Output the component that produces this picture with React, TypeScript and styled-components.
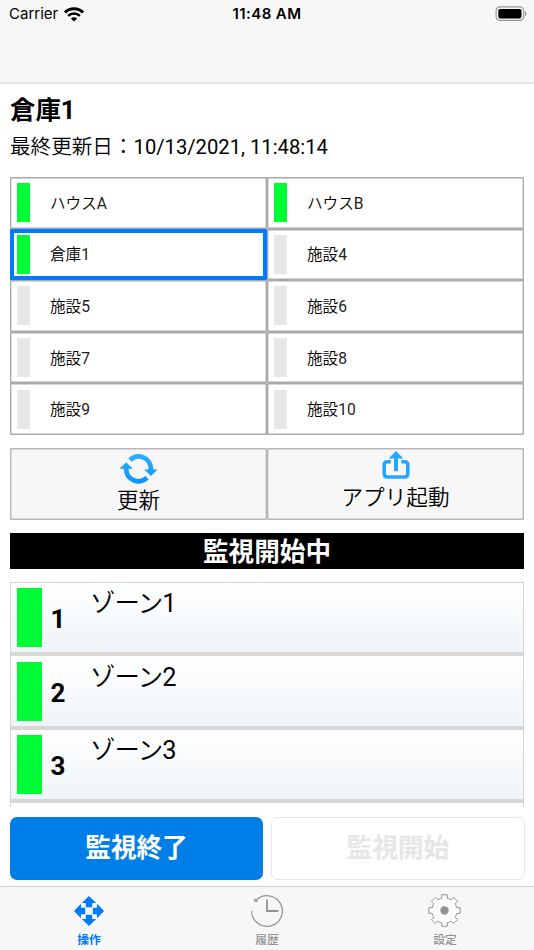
import React from "react";
import styled, { createGlobalStyle } from "styled-components";

const GlobalStyle = createGlobalStyle`
  * { box-sizing: border-box; }
  body {
    margin: 0;
    background: #fff;
    color: #000;
    font-family: Roboto, "Noto Sans CJK JP", sans-serif;
  }
  button { font-family: inherit; color: inherit; margin: 0; padding: 0; border: 0; }
`;

const Screen = styled.div`
  width: 534px;
  height: 950px;
  display: flex;
  flex-direction: column;
  overflow: hidden;
  background: #fff;
`;

const NavBar = styled.header`
  height: 84px;
  flex: none;
  background: #f7f7f7;
  border-bottom: 2px solid #e6e6e6;
`;

const StatusBar = styled.div`
  height: 28px;
  display: grid;
  grid-template-columns: 1fr auto 1fr;
  align-items: center;
  padding: 0 7px 0 9px;
  font-family: Inter, sans-serif;
  line-height: 28px;
`;

const Carrier = styled.div`
  display: flex;
  align-items: center;
  gap: 6px;
  font-size: 15px;
`;

const Clock = styled.div`
  margin-right: 2px;
  font-weight: 600;
  font-size: 15px;
  letter-spacing: 0.4px;
`;

const BatterySlot = styled.div`
  display: flex;
  justify-content: flex-end;
`;

const Content = styled.main`
  height: 802px;
  flex: none;
  display: flex;
  flex-direction: column;
  padding: 0 10px;
`;

const Title = styled.h1`
  margin: 9px 0 0;
  height: 34px;
  line-height: 34px;
  font-size: 25.4px;
  font-weight: 700;
`;

const Updated = styled.div`
  display: flex;
  margin-top: 3px;
  height: 30px;
  line-height: 34px;
  font-size: 20.6px;
  white-space: nowrap;
`;

const Stamp = styled.span`
  font-size: 20.2px;
`;

const Light = styled.span`
  font-weight: 350;
`;

const SiteGrid = styled.div`
  margin-top: 17px;
  height: 258px;
  display: grid;
  flex: none;
  grid-template-columns: 257px 257px;
  grid-auto-rows: 51.6px;
`;

const Site = styled.div<{ $selected?: boolean }>`
  display: flex;
  align-items: center;
  gap: 20.5px;
  padding: 0 6.5px;
  border-radius: 1px;
  box-shadow: inset 0 0 0 ${(p) => (p.$selected ? "4px #007aff" : "1.4px #aaaaaa")};
  font-size: 15.6px;
  line-height: 22px;
`;

const SiteLamp = styled.i<{ $on?: boolean }>`
  width: 13px;
  height: 39px;
  background: ${(p) => (p.$on ? "#00fc37" : "#e7e7e7")};
`;

const SiteName = styled.span`
  padding-top: 2px;
  font-weight: 350;
`;

const Suffix = styled.span`
  font-weight: 400;
  color: #222;
`;

const Actions = styled.div`
  margin-top: 13px;
  height: 72px;
  display: grid;
  flex: none;
  grid-template-columns: 257px 257px;
`;

const Action = styled.button<{ $top: number; $gap?: number }>`
  display: flex;
  flex-direction: column;
  align-items: center;
  gap: ${(p) => p.$gap ?? 0}px;
  padding-top: ${(p) => p.$top}px;
  background: #f7f7f7;
  border-radius: 1px;
  box-shadow: inset 0 0 0 1.4px #b8b8b8;
  font-size: 21.6px;
  line-height: 34px;
`;

const State = styled.div`
  margin-top: 13px;
  height: 36px;
  flex: none;
  background: #000;
  color: #fff;
  text-align: center;
  font-size: 25.6px;
  line-height: 38px;
  font-weight: 700;
`;

const ZoneList = styled.div`
  margin-top: 12.5px;
  width: 514px;
  height: 225px;
  flex: none;
  overflow: hidden;
  border: 1px solid #d5d5d5;
  border-bottom: 0;
`;

const Zone = styled.div`
  height: 73.5px;
  display: grid;
  grid-template-columns: 25px 48px 1fr;
  padding: 5.5px 5px 0 6px;
  background: linear-gradient(#ffffff, #eff4f8);
  border-bottom: 4px solid #d7d7d7;
`;

const ZoneLamp = styled.i`
  height: 59px;
  background: #00fc37;
`;

const ZoneNo = styled.b`
  padding-left: 8.5px;
  font-size: 26px;
  line-height: 62px;
`;

const ZoneName = styled.span`
  font-size: 25.4px;
  line-height: 30px;
`;

const ZoneKana = styled.span`
  font-weight: 350;
  letter-spacing: -0.9px;
`;

const Controls = styled.div`
  margin-top: 10px;
  height: 63px;
  display: grid;
  flex: none;
  grid-template-columns: 253px 254px;
  gap: 8px;
`;

const Control = styled.button<{ $primary?: boolean }>`
  border-radius: 7px;
  background: ${(p) => (p.$primary ? "#007ee8" : "#fff")};
  border: ${(p) => (p.$primary ? "0" : "1px solid #e5e5e5")};
  color: ${(p) => (p.$primary ? "#fff" : "#e6e6e6")};
  font-size: 25.6px;
  line-height: 38px;
  font-weight: 700;
`;

const TabBar = styled.nav`
  height: 64px;
  flex: none;
  display: grid;
  grid-template-columns: repeat(3, 1fr);
  background: #f7f7f7;
  border-top: 1px solid #d0d0d0;
`;

const Tab = styled.div<{ $active?: boolean }>`
  display: flex;
  flex-direction: column;
  align-items: center;
  padding-top: 5px;
  color: ${(p) => (p.$active ? "#007aff" : "#929292")};
  font-size: 11.8px;
  line-height: 18px;
  font-weight: ${(p) => (p.$active ? 700 : 500)};
  svg { margin-bottom: 1px; }
`;

const WifiIcon = () => (
  <svg width="20" height="15" viewBox="0 0 20 15" fill="none" stroke="#000" strokeWidth="2.9">
    <path d="M1 5.4a12.8 12.8 0 0 1 18 0" />
    <path d="M4.1 8.9a8.4 8.4 0 0 1 11.8 0" strokeWidth="2.6" />
    <path d="M6.9 11.5a4.4 4.4 0 0 1 6.2 0L10 14.6z" fill="#000" stroke="none" />
  </svg>
);

const BatteryIcon = () => (
  <svg width="32" height="16" viewBox="0 0 32 16">
    <rect x="1.1" y="0.8" width="27.6" height="13.6" rx="4" fill="none" stroke="#999" strokeWidth="1.2" />
    <rect x="3.3" y="3" width="23.2" height="9.4" rx="1.8" fill="#000" />
    <path d="M30 5.3c2 .7 2 4.1 0 4.8z" fill="#999" />
  </svg>
);

const RefreshIcon = () => (
  <svg width="39" height="30" viewBox="0 0 39 30">
    <defs>
      <linearGradient id="sync" gradientUnits="userSpaceOnUse" x1="0" y1="0" x2="0" y2="30">
        <stop offset="0" stopColor="#2bb0ff" />
        <stop offset="1" stopColor="#0b92fb" />
      </linearGradient>
    </defs>
    <g fill="none" stroke="url(#sync)" strokeWidth="4.8">
      <path d="M11 6A12.2 12.2 0 0 1 31.8 14.6V17" />
      <path d="M28 23.6A12.2 12.2 0 0 1 7.2 15V13" />
    </g>
    <path d="M25.2 15.4h13.4L32 22zM.4 14.8h13.4L7.2 8.2z" fill="url(#sync)" />
  </svg>
);

const ShareIcon = () => (
  <svg width="28" height="28" viewBox="0 0 28 28" fill="none" stroke="#27a6ff">
    <path d="M8.8 10.8H5.4Q2.2 10.8 2.2 14V22.8q0 3.2 3.2 3.2h17.2q3.2 0 3.2-3.2V14q0-3.2-3.2-3.2H19.2" strokeWidth="3.6" />
    <path d="M14 7v13.2" strokeWidth="4" />
    <path d="M6.6 7.6L14 0l7.4 7.6z" fill="#27a6ff" stroke="none" />
  </svg>
);

const MoveIcon = () => (
  <svg width="36" height="38" viewBox="-18 -19 36 38" fill="currentColor">
    {[0, 90, 180, 270].map((a) => (
      <path key={a} transform={`rotate(${a})`} d="M0-15L7.2-8H3.2V-3.8H-3.2V-8H-7.2z" />
    ))}
  </svg>
);

const HistoryIcon = () => (
  <svg width="36" height="38" viewBox="-18 -19 36 38" fill="none" stroke="currentColor" strokeWidth="1.2">
    <path d="M-10.8-10.8A15.3 15.3 0 1 1-15.3 0" />
    <path d="M-12.8-13V-9.2H-8.6z" fill="currentColor" stroke="none" />
    <path d="M0-11.5V0H11.5" strokeWidth="1.8" />
  </svg>
);

const toothed = Array.from({ length: 8 }, (_, i) => {
  const a = (i * Math.PI) / 4;
  return [[-3.8, -12], [-2.8, -12.2], [-2.8, -15.7], [2.8, -15.7], [2.8, -12.2], [3.8, -12]]
    .map(([x, y]) => `${(x * Math.cos(a) - y * Math.sin(a)).toFixed(2)},${(x * Math.sin(a) + y * Math.cos(a)).toFixed(2)}`)
    .join(" ");
}).join(" ");

const GearIcon = () => (
  <svg width="36" height="38" viewBox="-17.5 -18.5 36 38">
    <polygon points={toothed} fill="#fcfcfc" stroke="currentColor" strokeWidth="1" />
    <circle r="4.2" fill="currentColor" />
  </svg>
);

const sites = [
  { name: "ハウス", suffix: "A", on: true },
  { name: "ハウス", suffix: "B", on: true },
  { name: "倉庫", suffix: "1", on: true, selected: true },
  { name: "施設", suffix: "4" },
  { name: "施設", suffix: "5" },
  { name: "施設", suffix: "6" },
  { name: "施設", suffix: "7" },
  { name: "施設", suffix: "8" },
  { name: "施設", suffix: "9" },
  { name: "施設", suffix: "10" },
];

export default function App() {
  return (
    <Screen>
      <GlobalStyle />
      <NavBar>
        <StatusBar>
          <Carrier>Carrier <WifiIcon /></Carrier>
          <Clock>11:48 AM</Clock>
          <BatterySlot><BatteryIcon /></BatterySlot>
        </StatusBar>
      </NavBar>
      <Content>
        <Title>倉庫1</Title>
        <Updated><Light>最終更新日：</Light><Stamp>10/13/2021, 11:48:14</Stamp></Updated>
        <SiteGrid>
          {sites.map((s) => (
            <Site key={s.suffix} $selected={s.selected}>
              <SiteLamp $on={s.on} />
              <SiteName>{s.name}<Suffix>{s.suffix}</Suffix></SiteName>
            </Site>
          ))}
        </SiteGrid>
        <Actions>
          <Action $top={6}><RefreshIcon /><Light>更新</Light></Action>
          <Action $top={3} $gap={2}><ShareIcon /><Light>アプリ起動</Light></Action>
        </Actions>
        <State>監視開始中</State>
        <ZoneList>
          {[1, 2, 3].map((n) => (
            <Zone key={n}>
              <ZoneLamp />
              <ZoneNo>{n}</ZoneNo>
              <ZoneName><ZoneKana>ゾーン</ZoneKana>{n}</ZoneName>
            </Zone>
          ))}
        </ZoneList>
        <Controls>
          <Control $primary>監視終了</Control>
          <Control>監視開始</Control>
        </Controls>
      </Content>
      <TabBar>
        <Tab $active><MoveIcon />操作</Tab>
        <Tab><HistoryIcon />履歴</Tab>
        <Tab><GearIcon />設定</Tab>
      </TabBar>
    </Screen>
  );
}
